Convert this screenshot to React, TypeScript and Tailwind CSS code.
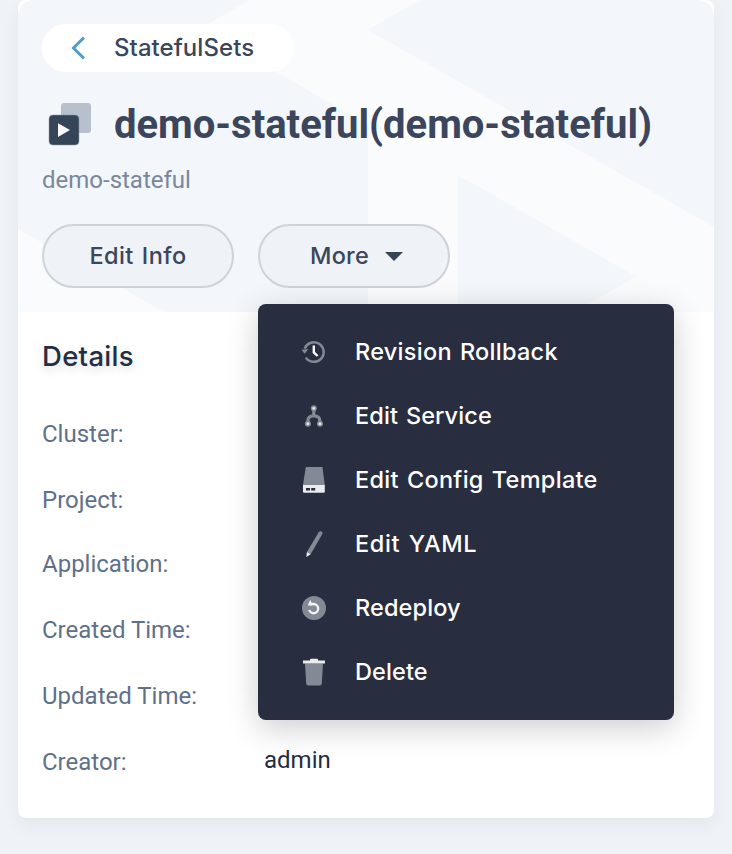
import type { ReactNode } from "react";

const menuItems: { label: string; tracking: string; icon: ReactNode }[] = [
  {
    label: "Revision Rollback",
    tracking: "tracking-[0.28px]",
    icon: (
      <>
        <path d="M5.800 19.600A9.800 9.800 0 1 0 4.700 10.600" fill="none" stroke="#838995" strokeWidth="2.500" />
        <path d="M1.500 11.700L8.400 11L4.600 15.800Z" fill="#838995" />
        <path d="M13.800 7.600v6.800l3.800 3.600" fill="none" stroke="#fff" strokeWidth="2.400" />
      </>
    ),
  },
  {
    label: "Edit Service",
    tracking: "tracking-[0.1px]",
    icon: (
      <>
        <path d="M13.800 7v6.600M8 21v-3q0-3.700 5.800-4.400q5.900.7 5.900 4.400V21" fill="none" stroke="#838995" strokeWidth="3.200" />
        <g fill="#e6e6e6" stroke="#838995" strokeWidth="1.500">
          <circle cx="13.800" cy="6.300" r="2.300" />
          <circle cx="7.900" cy="21.700" r="2.300" />
          <circle cx="20" cy="21.700" r="2.300" />
        </g>
      </>
    ),
  },
  {
    label: "Edit Config Template",
    tracking: "tracking-[0.3px]",
    icon: (
      <>
        <path d="M5.800 1h16.600L24.800 19H3Z" fill="#838995" />
        <path d="M3 19h21.800v6.600a1.200 1.200 0 0 1-1.200 1.200H4.200A1.200 1.200 0 0 1 3 25.600Z" fill="#ececed" />
        <path d="M6 22h4v2.600H6zM11.200 22h4v2.600h-4z" fill="#282d3f" />
      </>
    ),
  },
  {
    label: "Edit YAML",
    tracking: "tracking-[0.66px]",
    icon: (
      <>
        <path d="M18.700 2.300q.9-1.600 2.700-.7t.9 2.500L10.700 24.200L6.900 22.100Z" fill="#838995" />
        <path d="M6.900 22.100L10.700 24.200L6.300 27Z" fill="#f5f5f5" />
      </>
    ),
  },
  {
    label: "Redeploy",
    tracking: "tracking-[0.12px]",
    icon: (
      <>
        <circle cx="14" cy="14" r="12" fill="#838995" />
        <path d="M9.800 10h3.900a4.600 4.600 0 1 1-4.500 6" fill="none" stroke="#f2f2f2" strokeWidth="2.400" />
        <path d="M7.800 11.600L10.200 5.800L12.800 11.600Z" fill="#f2f2f2" />
      </>
    ),
  },
  {
    label: "Delete",
    tracking: "tracking-[0.1px]",
    icon: (
      <>
        <path d="M5 5.400h18l-1.200 20q-.1 2-2 2H8.200q-1.900 0-2-2Z" fill="#838995" />
        <path d="M10 2.400V1.800q0-1 1-1h6q1 0 1 1v.6h7v3H3v-3Z" fill="#ececed" />
      </>
    ),
  },
];

const details = [
  { label: "Cluster:", height: "h-[66px]" },
  { label: "Project:", height: "h-[64px]" },
  { label: "Application:", height: "h-[66px]" },
  { label: "Created Time:", height: "h-[66px]" },
  { label: "Updated Time:", height: "h-[66px]" },
  { label: "Creator:", height: "h-[66px]", value: "admin" },
];

function Header() {
  return (
    <header className="relative h-[312px] overflow-hidden rounded-t-2xl bg-[#f3f6fb] px-6 pt-6">
      <svg className="absolute inset-0" width="696" height="312" viewBox="18 0 696 312" fill="#fafbfd">
        <path d="M250 0H420L368 30L714 227V312H368V125L201 28Z" />
        <path d="M18 229L164 312H18Z" />
        <path d="M458 175L636 276.500L574 312H458Z" fill="#f3f6fb" />
      </svg>
      <div className="relative">
        <a className="flex h-12 w-[252px] items-center rounded-full bg-white pl-[28px] font-['Inter','Liberation_Sans',sans-serif] text-[24px] font-medium text-[#3b455b]">
          <svg width="16" height="24" viewBox="0 0 16 24" fill="none" stroke="#4f9dcd" strokeWidth="3">
            <path d="M14 1.500L3.500 12L14 22.500" />
          </svg>
          <span className="ml-7 tracking-[0.05px]">StatefulSets</span>
        </a>
        <div className="mt-[28px] flex h-12 items-center">
          <svg className="ml-[6px]" width="44" height="44" viewBox="0 0 44 44">
            <rect x="13" y="1" width="30" height="30" rx="3" fill="#b8c0cd" />
            <rect x="1" y="13" width="30" height="30" rx="4" fill="#364457" stroke="#8d98a8" strokeWidth=".5" />
            <path d="M10 21.300L22 28L10 35Z" fill="#f6f8fb" />
          </svg>
          <h1 className="ml-[22px] pt-0.5 text-[40px] leading-[48px] font-bold whitespace-nowrap text-[#3b455b]">demo-stateful(demo-stateful)</h1>
        </div>
        <p className="mt-4 h-8 text-2xl text-[#79879c]">demo-stateful</p>
        <div className="mt-[28px] flex gap-6 font-['Inter','Liberation_Sans',sans-serif] text-[23.500px] font-medium text-[#3b455b] [text-shadow:0_4px_8px_rgba(36,46,66,.12)]">
          <button className="h-16 w-48 rounded-full border-2 border-[#ccd3db] bg-[#eff2f7] tracking-[0.4px] [word-spacing:1.500px]">Edit Info</button>
          <button className="flex h-16 w-48 items-center gap-4 rounded-full border-2 border-[#ccd3db] bg-[#eff2f7] pl-[50px] tracking-[0.2px]">
            More
            <svg width="18" height="9" viewBox="0 0 18 9" fill="#364457"><path d="M0 0H18L9 9Z" /></svg>
          </button>
        </div>
      </div>
    </header>
  );
}

export default function App() {
  return (
    <main className="h-[854px] overflow-hidden bg-[#eff3f8] px-[18px] font-['Roboto','Liberation_Sans',sans-serif]">
      <section className="relative h-[818px] rounded-lg bg-white shadow-[0_8px_16px_rgba(36,46,66,.06)]">
        <Header />
        <div className="px-6 pt-[28px]">
          <h2 className="h-8 font-['Inter','Liberation_Sans',sans-serif] text-[27.500px] leading-8 font-medium tracking-[0.3px] text-[#242e42] [text-shadow:0_4px_8px_rgba(36,46,66,.15)]">Details</h2>
          <dl className="mt-[29px]">
            {details.map((d) => (
              <div key={d.label} className={`flex text-2xl leading-[66px] ${d.height}`}>
                <dt className="w-[222px] text-[#5f708a]">{d.label}</dt>
                <dd className="-mt-0.5 text-[#242e42]">{d.value}</dd>
              </div>
            ))}
          </dl>
        </div>
        <nav className="absolute top-[304px] left-[240px] h-[416px] w-[416px] rounded-lg bg-[#282d3f] py-4 shadow-[0_8px_32px_rgba(0,0,0,.2)]">
          {menuItems.map((item) => (
            <button key={item.label} className="flex h-16 w-full items-center pl-[42px] font-['Inter','Liberation_Sans',sans-serif] text-[23.500px] font-medium whitespace-nowrap text-white [word-spacing:1.500px]">
              <svg width="28" height="28" viewBox="0 0 28 28">{item.icon}</svg>
              <span className={`ml-[27px] ${item.tracking}`}>{item.label}</span>
            </button>
          ))}
        </nav>
      </section>
    </main>
  );
}
